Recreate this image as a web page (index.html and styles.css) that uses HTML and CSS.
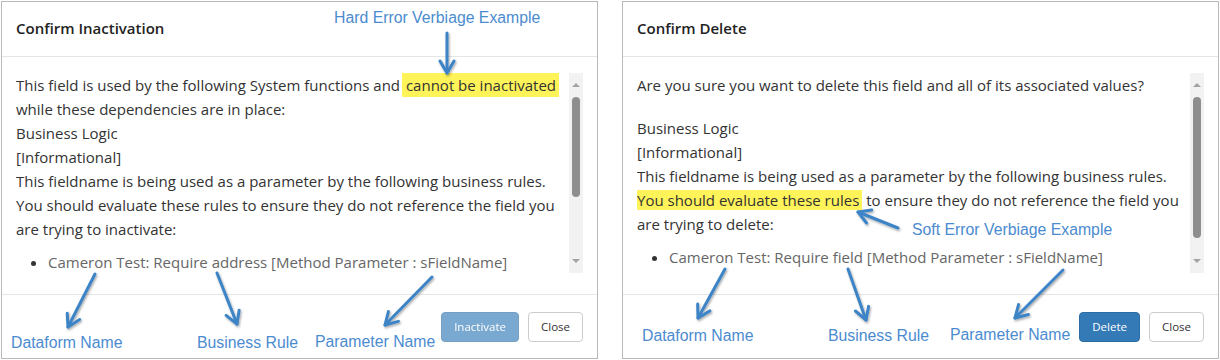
FILE: index.html
```html
<!DOCTYPE html>
<html lang="en">
<head>
  <meta charset="UTF-8">
  <title>Confirm Inactivation / Delete</title>
  <link rel="stylesheet" href="styles.css">
</head>
<body>
  <div class="page">
    <section class="modal">
      <header class="modal-header">
        <h4 class="modal-title">Confirm Inactivation</h4>
      </header>
      <div class="modal-body">
        <div class="scroll-box">
          <div class="scroll-content">
            <p>This field is used by the following System functions and <mark class="hard">cannot be inactivated</mark><br>while these dependencies are in place:</p>
            <p>Business Logic</p>
            <p>[Informational]</p>
            <p>This fieldname is being used as a parameter by the following business rules.</p>
            <p>You should evaluate these rules to ensure they do not reference the field you<br>are trying to inactivate:</p>
            <ul class="rules">
              <li><span>Cameron Test: Require address [Method Parameter : sFieldName]</span></li>
            </ul>
          </div>
          <div class="scrollbar">
            <span class="sb-btn up"></span>
            <span class="sb-track"><span class="sb-thumb" style="height: 100px"></span></span>
            <span class="sb-btn down"></span>
          </div>
        </div>
      </div>
      <footer class="modal-footer">
        <button class="btn btn-primary" disabled>Inactivate</button>
        <button class="btn btn-default">Close</button>
      </footer>
    </section>

    <section class="modal">
      <header class="modal-header">
        <h4 class="modal-title">Confirm Delete</h4>
      </header>
      <div class="modal-body">
        <div class="scroll-box">
          <div class="scroll-content">
            <p class="question">Are you sure you want to delete this field and all of its associated values?</p>
            <p>Business Logic</p>
            <p>[Informational]</p>
            <p>This fieldname is being used as a parameter by the following business rules.</p>
            <p><mark class="soft">You should evaluate these rules</mark> to ensure they do not reference the field you<br>are trying to delete:</p>
            <ul class="rules">
              <li><span>Cameron Test: Require field [Method Parameter : sFieldName]</span></li>
            </ul>
          </div>
          <div class="scrollbar">
            <span class="sb-btn up"></span>
            <span class="sb-track"><span class="sb-thumb" style="height: 141px"></span></span>
            <span class="sb-btn down"></span>
          </div>
        </div>
      </div>
      <footer class="modal-footer">
        <button class="btn btn-primary">Delete</button>
        <button class="btn btn-default">Close</button>
      </footer>
    </section>
  </div>

  <!-- callouts drawn over the screenshot -->
  <div class="notes">
    <svg class="arrows" width="1220" height="360" viewBox="0 0 1220 360">
      <defs>
        <marker id="head" viewBox="0 0 18 18" refX="15" refY="9" markerWidth="18" markerHeight="18" markerUnits="userSpaceOnUse" orient="auto">
          <path d="M3 2 L15 9 L3 16" fill="none" stroke="#3d84c6" stroke-width="3" stroke-linecap="round" stroke-linejoin="round"/>
        </marker>
        <filter id="shade" x="-50%" y="-50%" width="200%" height="200%">
          <feDropShadow dx="1" dy="1.5" stdDeviation="1" flood-color="#000" flood-opacity="0.35"/>
        </filter>
      </defs>
      <g stroke="#3d84c6" stroke-width="3" stroke-linecap="round" fill="none" marker-end="url(#head)" filter="url(#shade)">
        <line x1="447" y1="33" x2="447" y2="73"/>
        <line x1="95" y1="274" x2="68" y2="327"/>
        <line x1="217" y1="273" x2="237" y2="324"/>
        <line x1="432" y1="277" x2="385" y2="325"/>
        <line x1="725" y1="269" x2="698" y2="318"/>
        <line x1="848" y1="269" x2="866" y2="320"/>
        <line x1="1063" y1="270" x2="1015" y2="318"/>
        <line x1="898" y1="228" x2="858" y2="212"/>
      </g>
    </svg>
    <span class="note" style="left: 334px; top: 9px">Hard Error Verbiage Example</span>
    <span class="note" style="left: 912px; top: 221px">Soft Error Verbiage Example</span>
    <span class="note" style="left: 11px; top: 334px">Dataform Name</span>
    <span class="note" style="left: 197px; top: 334px">Business Rule</span>
    <span class="note" style="left: 315px; top: 333px">Parameter Name</span>
    <span class="note" style="left: 642px; top: 327px">Dataform Name</span>
    <span class="note" style="left: 828px; top: 327px">Business Rule</span>
    <span class="note" style="left: 950px; top: 326px">Parameter Name</span>
  </div>
</body>
</html>
```

FILE: styles.css
```css
* {
  box-sizing: border-box;
}
body {
  margin: 0;
  width: 1220px;
  height: 360px;
  position: relative;
  overflow: hidden;
  background: #fff;
  font-family: "Open Sans", "Noto Sans", sans-serif;
  color: #333;
}
.page {
  display: flex;
  gap: 24px;
  padding: 1px 0 0 1px;
}
.modal {
  width: 597px;
  height: 358px;
  display: flex;
  flex-direction: column;
  border: 1px solid #b9b9b9;
  background: #fff;
}
.modal-header {
  height: 55px;
  padding: 0 14px 3px;
  display: flex;
  align-items: center;
  border-bottom: 1px solid #e5e5e5;
}
.modal-title {
  margin: 0;
  font-size: 15px;
  font-weight: 600;
  color: #222;
}
.modal-body {
  height: 237px;
  padding: 16px 14px 0;
}
.scroll-box {
  display: flex;
  height: 200px;
}
.scroll-content {
  flex: 1;
  overflow: hidden;
  font-size: 15px;
  line-height: 24px;
  white-space: nowrap;
}
.scroll-content p {
  margin: 0;
}
.scroll-content .question {
  margin-bottom: 19px;
}
mark.hard {
  background: #fff35a;
  color: inherit;
  padding: 2px 3px 2px 4px;
  margin-left: -2px;
}
mark.soft {
  background: #fff35a;
  color: inherit;
  padding: 0 3px 0 2px;
  margin-left: -2px;
}
.rules {
  margin: 9px 0 0;
  padding-left: 32px;
}
.rules li span {
  color: #666;
}
.scrollbar {
  width: 14px;
  display: flex;
  flex-direction: column;
  background: #f2f2f2;
}
.sb-btn {
  display: flex;
  align-items: center;
  justify-content: center;
}
.sb-btn.up {
  height: 24px;
}
.sb-btn.down {
  height: 25px;
}
.sb-btn::before {
  content: "";
  border: 4px solid transparent;
}
.sb-btn.up::before {
  border-top-width: 0;
  border-bottom-color: #a3a3a3;
}
.sb-btn.down::before {
  border-bottom-width: 0;
  border-top-color: #a3a3a3;
}
.sb-track {
  flex: 1;
  padding: 0 3px;
}
.sb-thumb {
  display: block;
  background: #8e8e8e;
  border-radius: 4px;
}
.modal-footer {
  flex: 1;
  padding: 0 14px;
  display: flex;
  justify-content: flex-end;
  align-items: center;
  gap: 9px;
  border-top: 1px solid #e5e5e5;
}
.btn {
  height: 30px;
  padding: 0 12px;
  font-family: inherit;
  font-size: 11.5px;
  color: #333;
  background: #fff;
  border: 1px solid #ccc;
  border-radius: 4px;
}
.btn-primary {
  color: #fff;
  background: #337ab7;
  border-color: #2e6da4;
}
.btn-primary:disabled {
  opacity: 0.65;
}
.notes {
  position: absolute;
  inset: 0;
  pointer-events: none;
}
.arrows {
  position: absolute;
  left: 0;
  top: 0;
}
.note {
  position: absolute;
  font-family: "Liberation Sans", Arial, sans-serif;
  font-size: 15.8px;
  line-height: 18px;
  color: #4b8bd0;
  white-space: nowrap;
}
```
